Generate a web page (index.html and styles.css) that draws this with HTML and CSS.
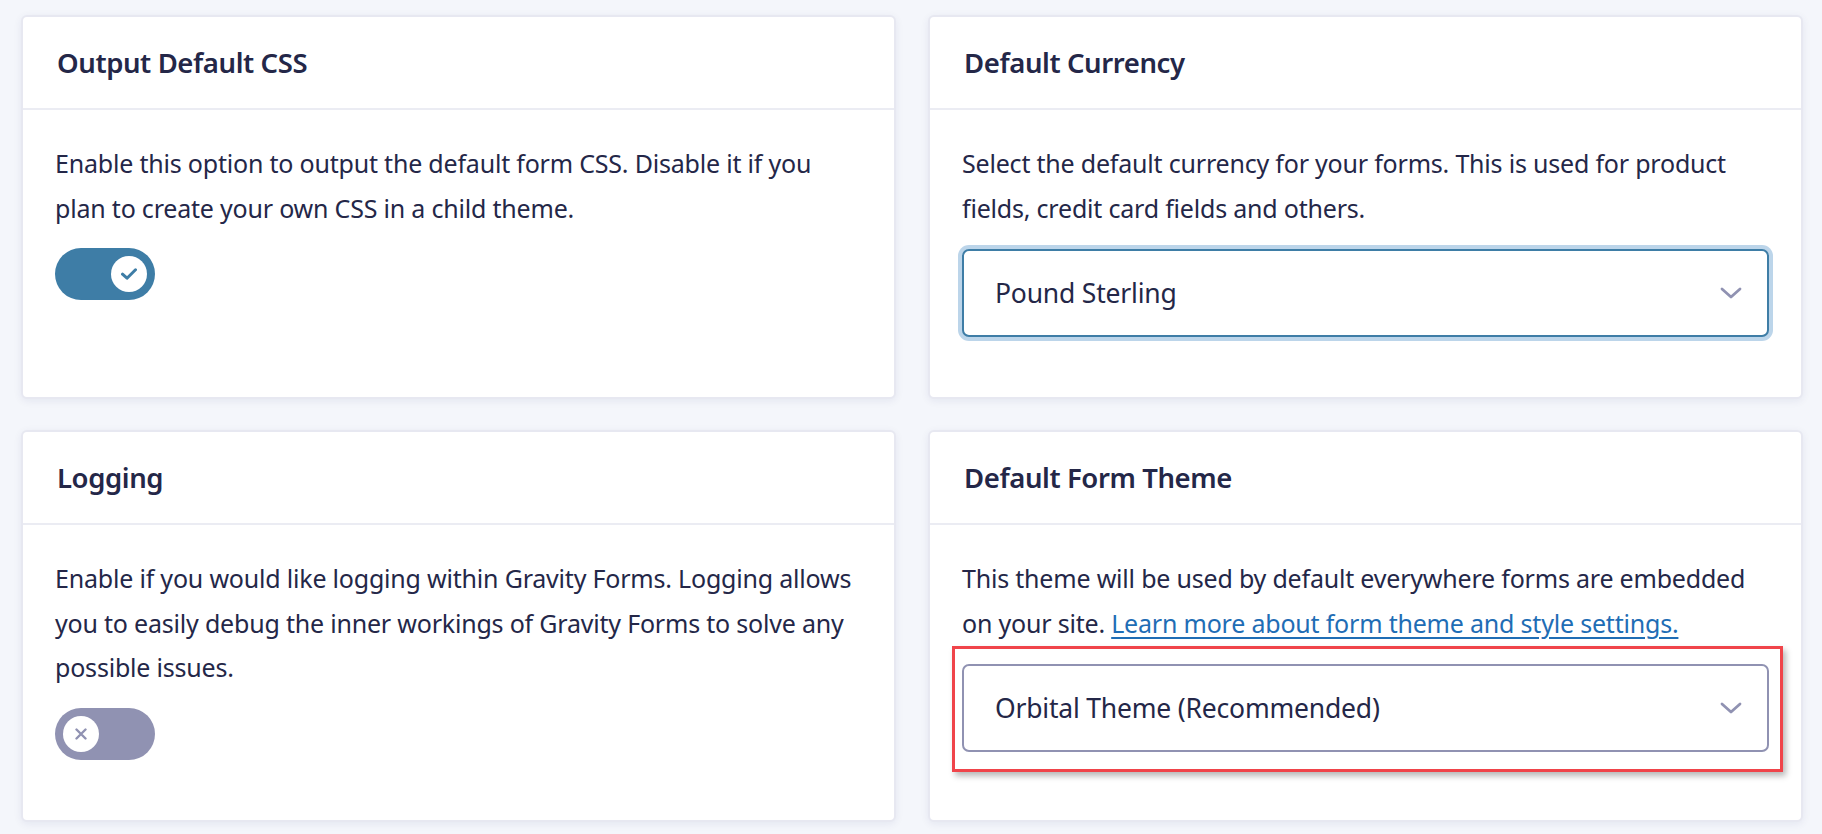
FILE: index.html
```html
<!DOCTYPE html>
<html lang="en">
<head>
<meta charset="utf-8">
<title>Settings</title>
<link rel="stylesheet" href="styles.css">
</head>
<body>
<main class="grid">
  <section class="card">
    <header class="card-head"><h2>Output Default CSS</h2></header>
    <div class="card-body">
      <p>Enable this option to output the default form CSS. Disable it if you plan to create your own CSS in a child theme.</p>
      <span class="toggle on">
        <span class="knob"><svg viewBox="0 0 16 12" width="16" height="12"><path d="M1.5 6.2 L6 10.2 L14.5 1.8" fill="none" stroke="#3e7da6" stroke-width="3" stroke-linecap="round" stroke-linejoin="round"/></svg></span>
      </span>
    </div>
  </section>
  <section class="card">
    <header class="card-head"><h2>Default Currency</h2></header>
    <div class="card-body">
      <p>Select the default currency for your forms. This is used for product fields, credit card fields and others.</p>
      <div class="select focused">
        <span class="select-value">Pound Sterling</span>
        <svg class="chev" viewBox="0 0 22 12" width="22" height="12"><path d="M2 2 L11 10 L20 2" fill="none" stroke="#9092b2" stroke-width="2.8" stroke-linecap="round" stroke-linejoin="round"/></svg>
      </div>
    </div>
  </section>
  <section class="card">
    <header class="card-head"><h2>Logging</h2></header>
    <div class="card-body">
      <p>Enable if you would like logging within Gravity Forms. Logging allows you to easily debug the inner workings of Gravity Forms to solve any possible issues.</p>
      <span class="toggle off">
        <span class="knob"><svg viewBox="0 0 12 12" width="12" height="12"><path d="M1.5 1.5 L10.5 10.5 M10.5 1.5 L1.5 10.5" fill="none" stroke="#9092b2" stroke-width="2.4" stroke-linecap="round"/></svg></span>
      </span>
    </div>
  </section>
  <section class="card">
    <header class="card-head"><h2>Default Form Theme</h2></header>
    <div class="card-body">
      <p>This theme will be used by default everywhere forms are embedded on your site. <a href="#">Learn more about form theme and style settings.</a></p>
      <div class="highlight-wrap">
        <div class="select">
          <span class="select-value">Orbital Theme (Recommended)</span>
          <svg class="chev" viewBox="0 0 22 12" width="22" height="12"><path d="M2 2 L11 10 L20 2" fill="none" stroke="#9092b2" stroke-width="2.8" stroke-linecap="round" stroke-linejoin="round"/></svg>
        </div>
        <span class="highlight"></span>
      </div>
    </div>
  </section>
</main>
</body>
</html>
```
FILE: styles.css
```css
* { box-sizing: border-box; }
html, body { margin: 0; padding: 0; }
body {
  background: #f4f6fb;
  font-family: "Noto Sans", "Open Sans", sans-serif;
  color: #242748;
  width: 1822px;
  height: 834px;
  overflow: hidden;
}
.grid {
  display: grid;
  grid-template-columns: 1fr 1fr;
  column-gap: 32px;
  row-gap: 31px;
  padding: 15px 19px 0 21px;
}
.card {
  background: #fff;
  border: 2px solid #e7e8f1;
  border-radius: 6px;
  box-shadow: 0 2px 8px rgba(18, 25, 97, 0.07);
  display: flex;
  flex-direction: column;
}
.card-head {
  height: 93px;
  border-bottom: 2px solid #ebecf3;
  display: flex;
  align-items: center;
  padding: 0 32px 0 34px;
}
.card-head h2 {
  margin: 0;
  font-size: 27.5px;
  letter-spacing: -0.4px;
  font-weight: 600;
  color: #242748;
  line-height: 1;
}
.card-body {
  padding: 31px 32px 60px 32px;
  flex: 1;
}
.card-body p {
  margin: 0;
  font-size: 25px;
  letter-spacing: -0.2px;
  line-height: 44.5px;
  color: #242748;
}
.card-body a {
  color: #1f6db5;
  text-decoration: underline;
  text-underline-offset: 4px;
  text-decoration-thickness: 2px;
}
.toggle {
  display: flex;
  align-items: center;
  width: 100px;
  height: 52px;
  border-radius: 26px;
  margin-top: 18px;
  padding: 0 8px;
}
.toggle.on { background: #3e7da6; justify-content: flex-end; }
.toggle.off { background: #9092b2; justify-content: flex-start; }
.knob {
  width: 36px;
  height: 36px;
  border-radius: 50%;
  background: #fff;
  display: flex;
  align-items: center;
  justify-content: center;
}
.select {
  margin-top: 19px;
  height: 88px;
  border: 2px solid #9092b2;
  border-radius: 7px;
  display: flex;
  align-items: center;
  justify-content: space-between;
  padding: 0 25px 0 31px;
  background: #fff;
}
.select.focused {
  border-color: #3e7da6;
  box-shadow: 0 0 0 4px #bcd5ea;
}
.select-value {
  font-size: 26.5px;
  letter-spacing: -0.2px;
  color: #242748;
}
.highlight-wrap {
  position: relative;
  padding-top: 19px;
}
.highlight-wrap .select {
  margin-top: 0;
}
.highlight {
  position: absolute;
  left: -10px;
  right: -14px;
  top: 1px;
  bottom: -20px;
  border: 3px solid #f0444a;
  box-shadow: 3px 4px 6px rgba(0, 0, 0, 0.28);
  pointer-events: none;
}
```
